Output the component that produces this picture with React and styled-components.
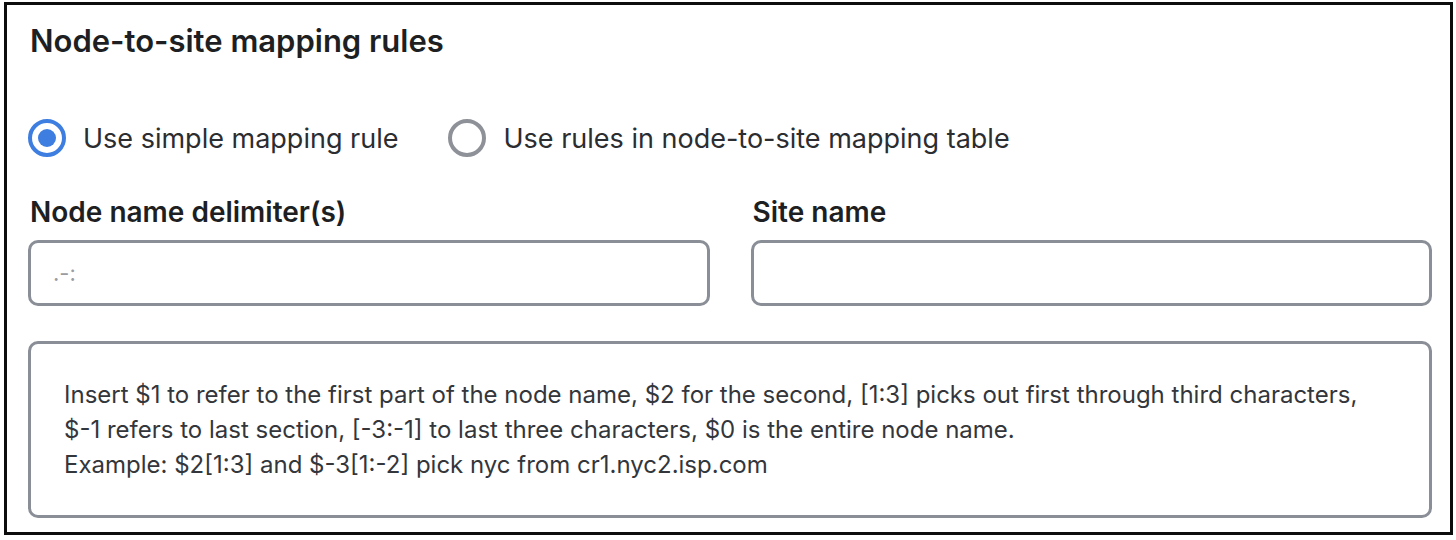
import React from 'react';
import styled, { createGlobalStyle } from 'styled-components';

const GlobalStyle = createGlobalStyle`
  html, body {
    margin: 0;
    padding: 0;
    background: #fff;
  }
  body {
    font-family: Inter, "Noto Sans", "Liberation Sans", sans-serif;
    color: #1d1f22;
  }
`;

const Frame = styled.section`
  box-sizing: border-box;
  width: 1449px;
  height: 533px;
  margin: 2px 0 0 4px;
  border: 3px solid #0d0d0d;
  padding: 18px 18px 14px 21px;
  display: flex;
  flex-direction: column;
`;

const Title = styled.h2`
  margin: 0 0 0 2px;
  font-size: 31px;
  line-height: 36px;
  font-weight: 600;
  color: #1d1f22;
`;

const RadioRow = styled.div`
  display: flex;
  align-items: center;
  gap: 50px;
  margin-top: 59px;
  height: 40px;
`;

const RadioOption = styled.label`
  display: flex;
  align-items: center;
  gap: 17px;
  font-size: 27px;
  color: #2b2d31;
  cursor: pointer;
`;

const RadioMark = styled.span`
  box-sizing: border-box;
  width: 38px;
  height: 38px;
  border-radius: 50%;
  border: 4px solid ${({ checked }) => (checked ? '#3d7ee0' : '#8e9198')};
  display: flex;
  align-items: center;
  justify-content: center;
  &::after {
    content: '';
    width: 18px;
    height: 18px;
    border-radius: 50%;
    background: ${({ checked }) => (checked ? '#3d7ee0' : 'transparent')};
  }
`;

const Fields = styled.div`
  display: grid;
  grid-template-columns: 1fr 1fr;
  column-gap: 41px;
  margin-top: 38px;
`;

const Field = styled.div`
  display: flex;
  flex-direction: column;
  gap: 12px;
`;

const FieldLabel = styled.span`
  font-size: 28px;
  line-height: 32px;
  font-weight: 600;
  color: #1d1f22;
  margin-left: 2px;
`;

const Input = styled.div`
  box-sizing: border-box;
  height: 66px;
  border: 3px solid #8a8e96;
  border-radius: 10px;
  padding: 0 22px;
  display: flex;
  align-items: center;
  font-size: 22px;
  color: #9a9ca1;
`;

const HelpBox = styled.div`
  box-sizing: border-box;
  margin-top: 35px;
  flex: 1;
  border: 3px solid #8a8e96;
  border-radius: 10px;
  padding: 0 33px;
  display: flex;
  flex-direction: column;
  justify-content: center;
  font-size: 24px;
  line-height: 35px;
  color: #33363b;
`;

const options = [
  { label: 'Use simple mapping rule', checked: true },
  { label: 'Use rules in node-to-site mapping table', checked: false },
];

const helpLines = [
  'Insert $1 to refer to the first part of the node name, $2 for the second, [1:3] picks out first through third characters,',
  '$-1 refers to last section, [-3:-1] to last three characters, $0 is the entire node name.',
  'Example: $2[1:3] and $-3[1:-2] pick nyc from cr1.nyc2.isp.com',
];

export default function App() {
  return (
    <>
      <GlobalStyle />
      <Frame>
        <Title>Node-to-site mapping rules</Title>
        <RadioRow>
          {options.map((o) => (
            <RadioOption key={o.label}>
              <RadioMark checked={o.checked} />
              {o.label}
            </RadioOption>
          ))}
        </RadioRow>
        <Fields>
          <Field>
            <FieldLabel>Node name delimiter(s)</FieldLabel>
            <Input>.-:</Input>
          </Field>
          <Field>
            <FieldLabel>Site name</FieldLabel>
            <Input />
          </Field>
        </Fields>
        <HelpBox>
          {helpLines.map((l) => (
            <div key={l}>{l}</div>
          ))}
        </HelpBox>
      </Frame>
    </>
  );
}
